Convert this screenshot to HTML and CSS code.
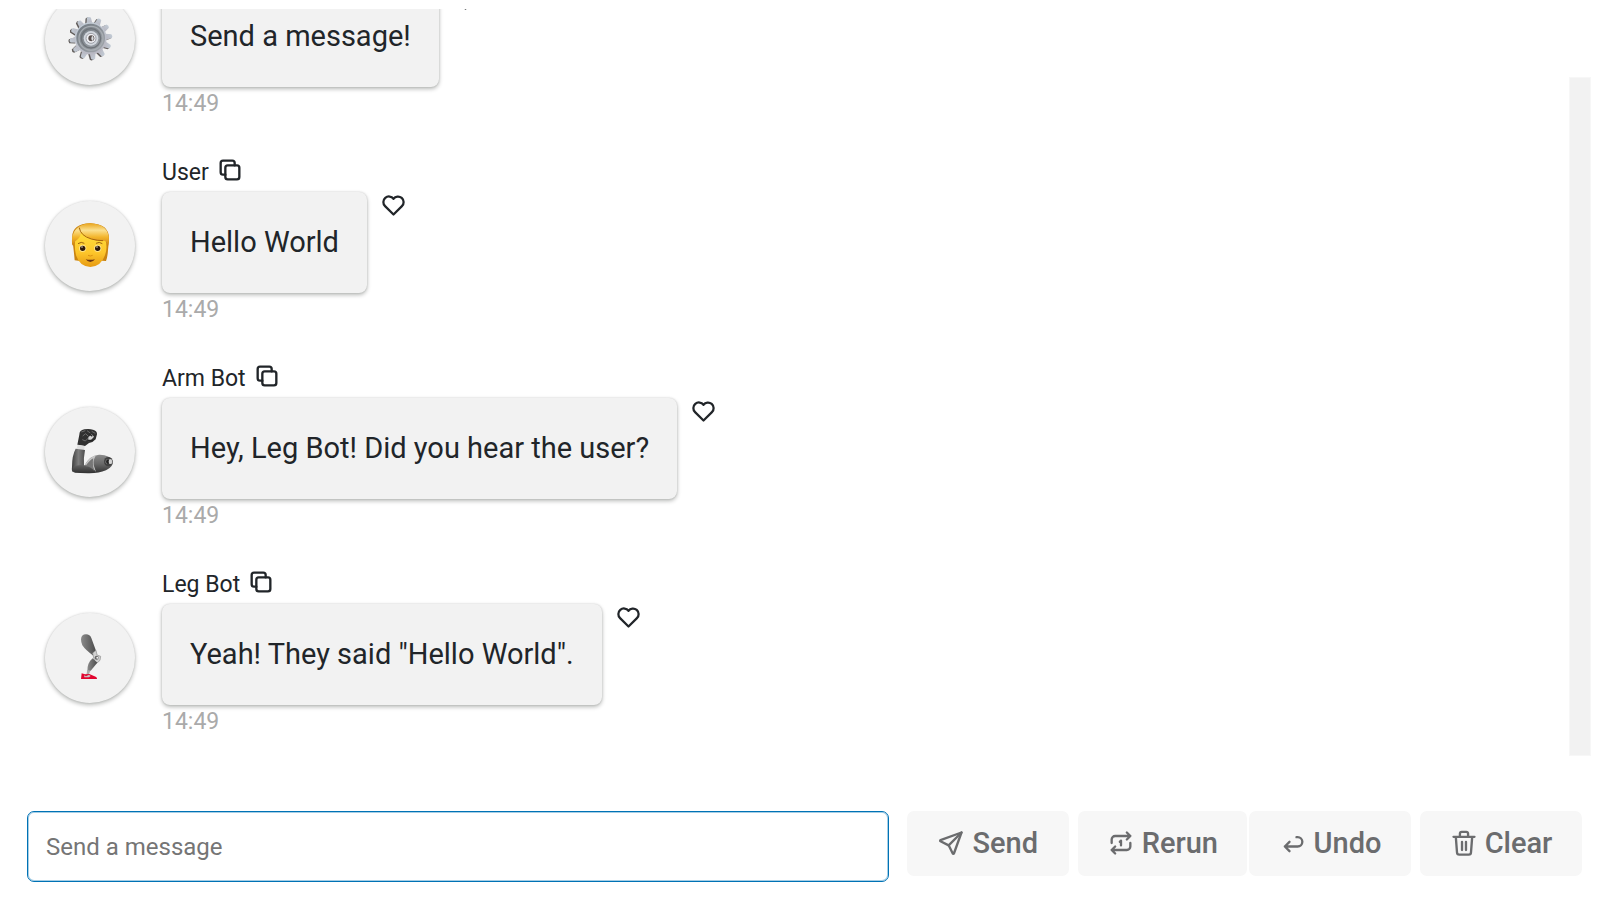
FILE: index.html
```html
<!DOCTYPE html>
<html lang="en">
<head>
<meta charset="utf-8">
<title>Chat</title>
<link rel="stylesheet" href="styles.css">
</head>
<body>
<svg class="defs" aria-hidden="true">
  <symbol id="copy" viewBox="0 0 24 24"><rect x="8" y="8" width="12" height="12" rx="2"/><path d="M16 8V6a2 2 0 0 0-2-2H6a2 2 0 0 0-2 2v8a2 2 0 0 0 2 2h2"/></symbol>
  <symbol id="heart" viewBox="0 0 24 24"><path d="M19.5 12.572L12 20l-7.5-7.428A5 5 0 1 1 12 6.006a5 5 0 1 1 7.5 6.572"/></symbol>
</svg>
<main class="chat">
  <div class="log">
    <article class="message">
      <div class="avatar">
        <svg class="emoji" viewBox="114 57 132 132" role="img" aria-label="Gear">
          <defs>
            <linearGradient id="steel" x1="0" y1="0" x2="0.4" y2="1"><stop offset="0" stop-color="#c3ced8"/><stop offset="1" stop-color="#b9b9c3"/></linearGradient>
            <linearGradient id="dish" x1="0" y1="0" x2="1" y2="1"><stop offset="0" stop-color="#707880"/><stop offset="1" stop-color="#a4a8ae"/></linearGradient>
            <g id="teeth"><path id="tooth" d="M-9-44L-6-62Q0-67 6-62L9-44z"/><use href="#tooth" transform="rotate(30)"/><use href="#tooth" transform="rotate(60)"/><use href="#tooth" transform="rotate(90)"/><use href="#tooth" transform="rotate(120)"/><use href="#tooth" transform="rotate(150)"/><use href="#tooth" transform="rotate(180)"/><use href="#tooth" transform="rotate(210)"/><use href="#tooth" transform="rotate(240)"/><use href="#tooth" transform="rotate(270)"/><use href="#tooth" transform="rotate(300)"/><use href="#tooth" transform="rotate(330)"/></g>
          </defs>
          <use href="#teeth" transform="translate(179 120) rotate(-6)" fill="#615c5a"/>
          <use href="#teeth" transform="translate(183 118) rotate(-6)" fill="url(#steel)"/>
          <circle cx="182" cy="118" r="48" fill="url(#steel)"/>
          <circle cx="182" cy="117" r="43" fill="url(#dish)"/>
          <circle cx="183" cy="118" r="36" fill="none" stroke="#a8adb2" stroke-width="4"/>
          <circle cx="183" cy="118" r="29" fill="none" stroke="#6f7479" stroke-width="4"/>
          <circle cx="183" cy="118" r="22" fill="#d2d7de"/>
          <circle cx="183" cy="118" r="15" fill="#f0f0f4" stroke="#9b9da4" stroke-width="3"/>
          <circle cx="184" cy="118" r="9" fill="#59514f"/>
          <path d="M187 110q8 8 0 16q-6-8 0-16" fill="#d9dce0"/>
        </svg>
      </div>
      <div class="body">
        <header class="meta"></header>
        <div class="row"><p class="bubble">Send a message!</p><button class="icon-button" aria-label="Like"><svg class="heart"><use href="#heart"/></svg></button></div>
        <time class="time">14:49</time>
      </div>
    </article>

    <article class="message">
      <div class="avatar">
        <svg class="emoji" viewBox="114 222 132 132" role="img" aria-label="Person">
          <defs>
            <linearGradient id="skin" x1="0" y1="0" x2="0" y2="1"><stop offset="0" stop-color="#ffdf3c"/><stop offset="0.6" stop-color="#fdc62b"/><stop offset="1" stop-color="#e79a12"/></linearGradient>
            <linearGradient id="hair" x1="0" y1="0" x2="0" y2="1"><stop offset="0" stop-color="#e9a51c"/><stop offset="0.3" stop-color="#fbe08e"/><stop offset="0.6" stop-color="#f3b52b"/><stop offset="1" stop-color="#c87a12"/></linearGradient>
          </defs>
          <path d="M127 268Q122 222 181 220Q240 222 237 270L234 300Q233 320 228 333L217 332L145 332L134 331Q132 306 127 268z" fill="#c9830f"/>
          <path d="M135 270Q140 245 155 243L225 265Q234 292 225 316Q213 350 181 351Q149 350 138 316Q133 295 135 270z" fill="url(#skin)"/>
          <path d="M126 283Q122 224 181 220Q238 222 237 274L234 288Q229 270 220 273Q178 274 153 245Q154 260 137 273Q131 276 130 289z" fill="url(#hair)"/>
          <path d="M148 233Q151 257 184 267Q202 272 219 272" fill="none" stroke="#a8650e" stroke-width="3"/>
          <path d="M144 281q10-7 19-1M198 280q10-6 19 1" fill="none" stroke="#9b610e" stroke-width="3"/>
          <circle cx="158" cy="295" r="11" fill="#ffe48a"/><circle cx="203" cy="295" r="11" fill="#ffe48a"/>
          <circle cx="158" cy="295" r="8" fill="#2e1808"/><circle cx="203" cy="295" r="8" fill="#2e1808"/>
          <circle cx="156" cy="291" r="2" fill="#fff"/><circle cx="201" cy="291" r="2" fill="#fff"/>
          <path d="M174 316q7 4 14 0" fill="none" stroke="#dd9213" stroke-width="3"/>
          <path d="M167 328q14 3 28 0q-6 8-14 8t-14-8" fill="#6c3614"/>
        </svg>
      </div>
      <div class="body">
        <header class="meta"><span>User</span><button class="icon-button" aria-label="Copy"><svg class="copy"><use href="#copy"/></svg></button></header>
        <div class="row"><p class="bubble">Hello World</p><button class="icon-button" aria-label="Like"><svg class="heart"><use href="#heart"/></svg></button></div>
        <time class="time">14:49</time>
      </div>
    </article>

    <article class="message">
      <div class="avatar">
        <svg class="emoji" viewBox="114 120 132 132" role="img" aria-label="Mechanical arm">
          <defs>
            <linearGradient id="forearm"><stop offset="0" stop-color="#3d3d3d"/><stop offset="0.5" stop-color="#7d7d7d"/><stop offset="1" stop-color="#4b4b4b"/></linearGradient>
            <linearGradient id="upper" x1="0" y1="0" x2="0" y2="1"><stop offset="0" stop-color="#8b8b8b"/><stop offset="0.5" stop-color="#686868"/><stop offset="1" stop-color="#303030"/></linearGradient>
          </defs>
          <path d="M142 164L148 134Q148 121 163 118Q178 116 189 119Q202 122 201 133L197 148Q190 157 177 159L165 168z" fill="#303030"/>
          <path d="M154 126l12-4M171 122l10 7M185 124l11 6M158 138l9-7 8 8M157 149l9 4 9-9" stroke="#6b6b6b" stroke-width="3" fill="none"/>
          <path d="M175 142l10-9 7 7-9 10-8 4z" fill="#d3d3d3"/><path d="M178 132l9 7M174 151l15 0" stroke="#242424" stroke-width="4"/>
          <path d="M143 164L164 168L162 182L139 179z" fill="#dedede"/>
          <path d="M137 176L165 180Q160 205 162 228L130 247Q124 245 126 230Q126 196 137 176z" fill="url(#forearm)"/>
          <path d="M130 230Q147 222 164 226Q179 196 207 194Q239 193 249 214Q250 231 228 241Q205 251 173 250Q149 249 134 248Q126 240 130 230z" fill="url(#upper)"/>
          <path d="M164 226Q177 202 199 195Q188 209 191 225L198 246Q184 222 164 226z" fill="#c7c7c7"/>
          <path d="M166 229Q180 209 190 205Q186 220 193 243Q182 229 166 229z" fill="#777"/>
          <ellipse cx="235" cy="215" rx="13" ry="14" fill="#414141"/><rect x="227" y="208" width="20" height="14" rx="5" fill="#aaa"/><ellipse cx="234" cy="215" rx="6" ry="7" fill="#222"/><ellipse cx="241" cy="215" rx="5" ry="7" fill="#d4d4d4"/>
        </svg>
      </div>
      <div class="body">
        <header class="meta"><span>Arm Bot</span><button class="icon-button" aria-label="Copy"><svg class="copy"><use href="#copy"/></svg></button></header>
        <div class="row"><p class="bubble">Hey, Leg Bot! Did you hear the user?</p><button class="icon-button" aria-label="Like"><svg class="heart"><use href="#heart"/></svg></button></div>
        <time class="time">14:49</time>
      </div>
    </article>

    <article class="message">
      <div class="avatar">
        <svg class="emoji" viewBox="114 107 132 132" role="img" aria-label="Mechanical leg">
          <defs>
            <linearGradient id="thigh"><stop offset="0" stop-color="#8b8b8b"/><stop offset="0.5" stop-color="#6b6b6b"/><stop offset="1" stop-color="#4c4c4c"/></linearGradient>
          </defs>
          <path d="M153 117Q154 102 168 102Q180 102 184 113L198 151L190 166Q166 149 157 135Q153 127 153 117z" fill="url(#thigh)"/>
          <path d="M188 158L198 150L201 164L212 168L210 180L201 188L193 181z" fill="#d1d1d1" stroke="#8e8e8e" stroke-width="2"/>
          <circle cx="200" cy="172" r="6" fill="#666"/><circle cx="202" cy="172" r="3" fill="#eee"/>
          <path d="M188 174L202 187L182 211L172 213Q171 188 188 174z" fill="url(#thigh)"/>
          <path d="M172 209l9 2-5 13h-7z" fill="#aaa"/>
          <path d="M155 219l10 3 13-1 19 8q5 2 4 7h-48z" fill="#e2052f"/>
          <path d="M162 225l6 3 9-5 5 4-5 4h-14z" fill="#c9bfc1"/>
        </svg>
      </div>
      <div class="body">
        <header class="meta"><span>Leg Bot</span><button class="icon-button" aria-label="Copy"><svg class="copy"><use href="#copy"/></svg></button></header>
        <div class="row"><p class="bubble">Yeah! They said "Hello World".</p><button class="icon-button" aria-label="Like"><svg class="heart"><use href="#heart"/></svg></button></div>
        <time class="time">14:49</time>
      </div>
    </article>
  </div>
  <div class="track"></div>
</main>

<form class="composer">
  <input class="field" type="text" placeholder="Send a message" aria-label="Send a message">
  <div class="actions">
    <button class="action" type="button"><svg viewBox="0 0 24 24"><path d="M10 14L21 3"/><path d="M21 3l-6.5 18a.55.55 0 0 1-1 0L10 14l-7-3.5a.55.55 0 0 1 0-1z"/></svg>Send</button>
    <div class="pair">
      <button class="action" type="button"><svg viewBox="0 0 24 24"><path d="M4 12V9a3 3 0 0 1 3-3h13m-3-3l3 3-3 3M20 12v3a3 3 0 0 1-3 3H4m3 3l-3-3 3-3M11 11l1-1v4"/></svg>Rerun</button>
      <button class="action" type="button"><svg viewBox="0 0 24 24"><path d="M9 11l-4 4 4 4m-4-4h11a4 4 0 0 0 0-8h-1"/></svg>Undo</button>
    </div>
    <button class="action" type="button"><svg viewBox="0 0 24 24"><path d="M3 6.700h18M8.500 6.500V4a1.500 1.500 0 0 1 1.500-1.500h4A1.500 1.500 0 0 1 15.500 4v2.500M5 7l1 13a2 2 0 0 0 2 2h8a2 2 0 0 0 2-2l1-13M10.300 11v7M13.700 11v7"/></svg>Clear</button>
  </div>
</form>
</body>
</html>
```
FILE: styles.css
```css
* { box-sizing: border-box; }

body {
  margin: 0;
  height: 100vh;
  padding: 9px 9px 18px;
  display: flex;
  flex-direction: column;
  gap: 55px;
  background: #fff;
  color: #212529;
  font-family: Roboto, "Liberation Sans", sans-serif;
}

button { font: inherit; color: inherit; border: 0; cursor: pointer; }

.defs { display: none; }

.chat {
  flex: 1;
  min-height: 0;
  display: flex;
}

.log {
  flex: 1;
  overflow: hidden;
  display: flex;
  flex-direction: column;
  justify-content: flex-end;
  gap: 34px;
  padding: 0 36px 18px;
}

.track {
  width: 22px;
  margin-top: 68px;
  background: #f2f2f2;
  border: 1px solid #f7f7f7;
}

.message {
  flex: none;
  display: flex;
  gap: 27px;
}

.avatar {
  width: 90px;
  height: 90px;
  margin-top: 47px;
  display: grid;
  place-items: center;
  border-radius: 50%;
  background: #f2f2f2;
  box-shadow: 0 2px 4px rgba(0, 10, 5, 0.28), 0 0 2px rgba(0, 0, 0, 0.12);
}

.emoji { width: 44px; height: 44px; overflow: visible; }

.meta {
  height: 38px;
  display: flex;
  gap: 7px;
  font-size: 23px;
  line-height: 38px;
}

.row {
  display: flex;
  align-items: flex-start;
  gap: 13px;
}

.bubble {
  margin: 0;
  padding: 28px;
  border-radius: 8px;
  background: #f2f2f2;
  box-shadow: 0 2px 4px rgba(0, 10, 5, 0.28), 0 0 2px rgba(0, 0, 0, 0.16);
  font-size: 29px;
  line-height: 45px;
}

.icon-button {
  padding: 0;
  display: flex;
  align-self: flex-start;
  background: none;
}

.copy,
.heart {
  fill: none;
  stroke: currentColor;
  stroke-width: 2;
  stroke-linecap: round;
  stroke-linejoin: round;
}

.copy { width: 28px; height: 28px; margin-top: 2px; }
.heart { width: 27px; height: 27px; }

.time {
  display: block;
  color: #aaa;
  font-size: 23px;
  line-height: 33px;
}

.composer {
  display: flex;
  align-items: flex-start;
  gap: 18px;
  padding: 0 9px 0 18px;
}

.field {
  flex: 1;
  min-width: 0;
  height: 71px;
  padding: 0 18px;
  border: 1px solid #0072b5;
  border-radius: 7px;
  box-shadow: inset 0 0 0 1px rgba(0, 114, 181, 0.35);
  outline: 0;
  background: #fff;
  font: 24px Roboto, "Liberation Sans", sans-serif;
}

.field::placeholder { color: #757575; }

.actions { display: flex; gap: 9px; }
.pair { display: flex; gap: 2px; }

.action {
  min-width: 162px;
  height: 65px;
  padding: 0 29px 2px;
  display: flex;
  align-items: center;
  justify-content: center;
  gap: 7px;
  border-radius: 7px;
  background: #f7f7f7;
  color: #6b6c6e;
  font-size: 29px;
  font-weight: 500;
}

.action svg {
  width: 28px;
  height: 28px;
  fill: none;
  stroke: currentColor;
  stroke-width: 2;
  stroke-linecap: round;
  stroke-linejoin: round;
}
```
